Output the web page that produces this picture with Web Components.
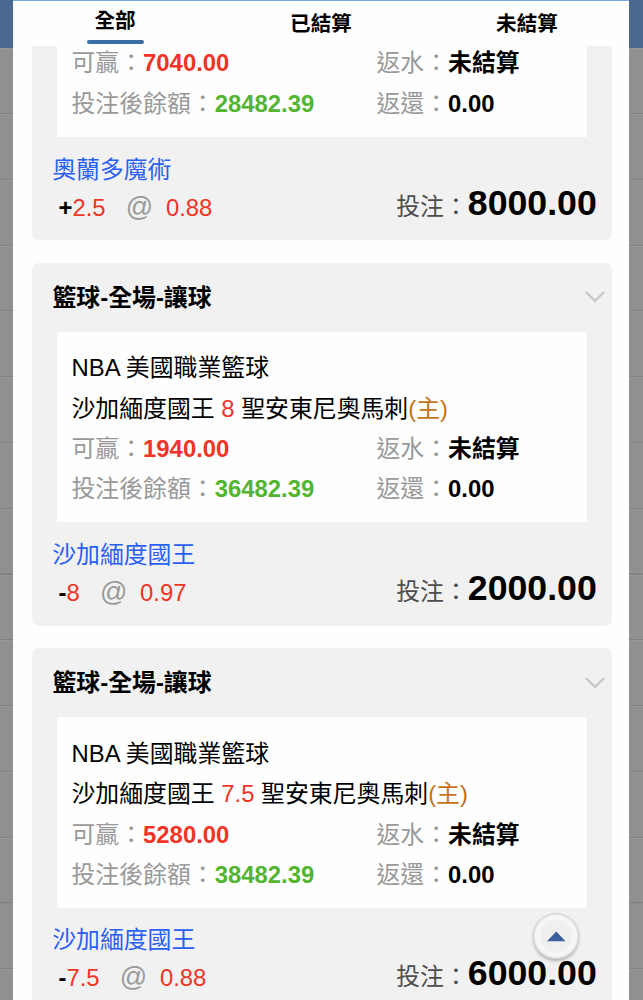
<!DOCTYPE html>
<html lang="zh-Hant">
<head>
<meta charset="utf-8">
<meta name="viewport" content="width=device-width, initial-scale=1">
<title>投注記錄</title>
<style>
  body {
    margin: 0;
    height: 1000px;
    overflow: hidden;
    font-family: "Liberation Sans", "Noto Sans CJK TC", sans-serif;
    font-size: 23.87px;
    color: #000;
  }
</style>
</head>
<body>
<bet-dialog>
  <bet-tabs slot="tabs">
    <bet-tab active>全部</bet-tab>
    <bet-tab>已結算</bet-tab>
    <bet-tab>未結算</bet-tab>
  </bet-tabs>
  <bet-card scrolled win="7040.00" balance="28482.39" pick="奧蘭多魔術" sign="+" line="2.5" odds="0.88" stake="8000.00"></bet-card>
  <bet-card home="聖安東尼奧馬刺" away="沙加緬度國王" win="1940.00" balance="36482.39" pick="沙加緬度國王" sign="-" line="8" odds="0.97" stake="2000.00"></bet-card>
  <bet-card home="聖安東尼奧馬刺" away="沙加緬度國王" win="5280.00" balance="38482.39" pick="沙加緬度國王" sign="-" line="7.5" odds="0.88" stake="6000.00"></bet-card>
  <top-button slot="float"></top-button>
</bet-dialog>

<script>
/**
 * Dialog with the dimmed page behind it
 */
class BetDialog extends HTMLElement {
  constructor() {
    super();
    this.attachShadow({ mode: 'open' });
  }

  connectedCallback() {
    this.shadowRoot.innerHTML = `
      <style>
        :host {
          display: block;
          position: relative;
          box-sizing: border-box;
          height: 1000px;
          padding: 0 14px 0 13px;
          background:
            linear-gradient(#4b6890, #4b6890) 0 0 / 100% 48px no-repeat,
            repeating-linear-gradient(#909090 0, #909090 65.1px, #808080 65.2px, #808080 66.2px, #909090 66.3px, #909090 65.75px) 0 0,
            #909090;
          background:
            linear-gradient(#4b6890, #4b6890) 0 0 / 100% 48px no-repeat,
            repeating-linear-gradient(#909090 0, #909090 47.2px, #808080 47.3px, #808080 48.3px, #989898 48.4px, #989898 49.3px, #909090 49.4px, #909090 65.78px);
        }

        .panel {
          display: flex;
          flex-direction: column;
          box-sizing: border-box;
          height: 100%;
          border-top: 1px solid #77a5dc;
          background: #fefefe;
        }

        .list {
          flex: 1;
          min-height: 0;
          overflow: hidden;
          padding: 0 17.5px 0 18.5px;
        }

        ::slotted(top-button) {
          position: absolute;
          left: 533px;
          top: 913px;
        }
      </style>
      <div class="panel">
        <slot name="tabs"></slot>
        <div class="list"><slot></slot></div>
      </div>
      <slot name="float"></slot>
    `;
  }
}

/**
 * Tab row
 */
class BetTabs extends HTMLElement {
  constructor() {
    super();
    this.attachShadow({ mode: 'open' });
  }

  connectedCallback() {
    this.shadowRoot.innerHTML = `
      <style>
        :host {
          display: grid;
          grid-template-columns: repeat(3, 206px);
          justify-content: center;
          height: 45px;
          flex: none;
        }
      </style>
      <slot></slot>
    `;
  }
}

class BetTab extends HTMLElement {
  constructor() {
    super();
    this.attachShadow({ mode: 'open' });
  }

  connectedCallback() {
    this.shadowRoot.innerHTML = `
      <style>
        :host {
          display: flex;
          flex-direction: column;
          align-items: center;
          padding-top: 8px;
          font-size: 20.6px;
          font-weight: bold;
          line-height: 30px;
        }

        :host([active]) {
          padding-top: 5px;
        }

        :host([active])::after {
          content: "";
          width: 57px;
          height: 4px;
          margin-top: 4px;
          border-radius: 2px;
          background: #3b6fa3;
        }
      </style>
      <span><slot></slot></span>
    `;
  }
}

/**
 * Single bet record
 */
class BetCard extends HTMLElement {
  constructor() {
    super();
    this.attachShadow({ mode: 'open' });
  }

  connectedCallback() {
    const get = name => this.getAttribute(name) || '';
    const scrolled = this.hasAttribute('scrolled');

    // the card under the tab row only shows its lower rows
    const header = scrolled ? '' : `
      <header class="header">
        <span>籃球-全場-讓球</span>
        <svg width="22" height="14" viewBox="0 0 22 14" fill="none" stroke="#c8c8c8" stroke-width="2.4">
          <path d="M1.8 2 L11 10.8 L20.2 2"/>
        </svg>
      </header>
    `;
    const match = scrolled ? '' : `
      <div class="row">NBA 美國職業籃球</div>
      <div class="row">${get('away')} <span class="red">${get('line')}</span> ${get('home')}<span class="host">(主)</span></div>
    `;

    this.shadowRoot.innerHTML = `
      <style>
        :host {
          display: block;
          box-sizing: border-box;
          height: 363px;
          margin-bottom: 22.7px;
          border-radius: 7px;
          background: #f1f1f1;
          overflow: hidden;
        }

        :host([scrolled]) {
          height: 194px;
          border-radius: 0 0 7px 7px;
        }

        .header {
          display: flex;
          justify-content: space-between;
          align-items: flex-start;
          height: 69px;
          box-sizing: border-box;
          padding: 0 6px 0 21px;
          font-weight: bold;
          line-height: 69px;
        }

        .header svg {
          margin-top: 27.5px;
        }

        .box {
          display: flow-root;
          box-sizing: border-box;
          height: 190.5px;
          margin: 0 24.5px 0 25px;
          padding: 16.5px 0 0 15px;
          background: #fefefe;
        }

        :host([scrolled]) .box {
          height: 91px;
          padding-top: 0;
        }

        :host([scrolled]) .row:first-child {
          margin-top: -2.7px;
        }

        .row {
          display: block;
          line-height: 40.4px;
          height: 40.4px;
          white-space: nowrap;
        }

        .pair {
          display: grid;
          grid-template-columns: 305px 1fr;
          color: #999;
        }

        .red { color: #f03426; }
        .green { color: #52b52f; }
        .black { color: #000; }
        .host { color: #c47319; }

        .footer {
          display: flex;
          justify-content: space-between;
          align-items: flex-end;
          padding: 12.5px 14.7px 0 20.7px;
          white-space: nowrap;
        }

        .pick {
          line-height: 39px;
          color: #2a5ff5;
        }

        .price {
          display: flex;
          align-items: baseline;
          line-height: 36px;
          padding-left: 6.3px;
        }

        .at {
          margin: 0 12.7px 0 20.2px;
          font-size: 27px;
          color: #999;
        }

        .stake {
          display: flex;
          align-items: baseline;
          line-height: 44px;
          margin-bottom: -3px;
          color: #4d4d4d;
        }

        .stake b {
          font-size: 35.7px;
          color: #000;
        }
      </style>
      ${header}
      <div class="box">
        ${match}
        <div class="row pair">
          <span>可贏：<b class="red">${get('win')}</b></span>
          <span>返水：<b class="black">未結算</b></span>
        </div>
        <div class="row pair">
          <span>投注後餘額：<b class="green">${get('balance')}</b></span>
          <span>返還：<b class="black">0.00</b></span>
        </div>
      </div>
      <div class="footer">
        <div>
          <div class="pick">${get('pick')}</div>
          <div class="price"><b>${get('sign')}</b><span class="red">${get('line')}</span><span class="at">@</span><span class="red">${get('odds')}</span></div>
        </div>
        <div class="stake"><span>投注：</span><b>${get('stake')}</b></div>
      </div>
    `;
  }
}

/**
 * Back to top button
 */
class TopButton extends HTMLElement {
  constructor() {
    super();
    this.attachShadow({ mode: 'open' });
  }

  connectedCallback() {
    this.shadowRoot.innerHTML = `
      <style>
        :host {
          display: flex;
          align-items: center;
          justify-content: center;
          box-sizing: border-box;
          width: 46px;
          height: 46px;
          border: 1.5px solid #d2d2d2;
          border-radius: 50%;
          background: radial-gradient(circle at 50% 50%, #efefef 45%, #f9f9f9 62%, #e6e6e6 72%);
          box-shadow: 0 2px 3px rgba(0, 0, 0, 0.28);
        }
      </style>
      <svg width="20" height="11" viewBox="0 0 20 11">
        <path d="M10.3 0.5 L19.5 10.2 H1 Z" fill="#3b5f9d"/>
      </svg>
    `;
  }
}

customElements.define('bet-dialog', BetDialog);
customElements.define('bet-tabs', BetTabs);
customElements.define('bet-tab', BetTab);
customElements.define('bet-card', BetCard);
customElements.define('top-button', TopButton);
</script>
</body>
</html>
